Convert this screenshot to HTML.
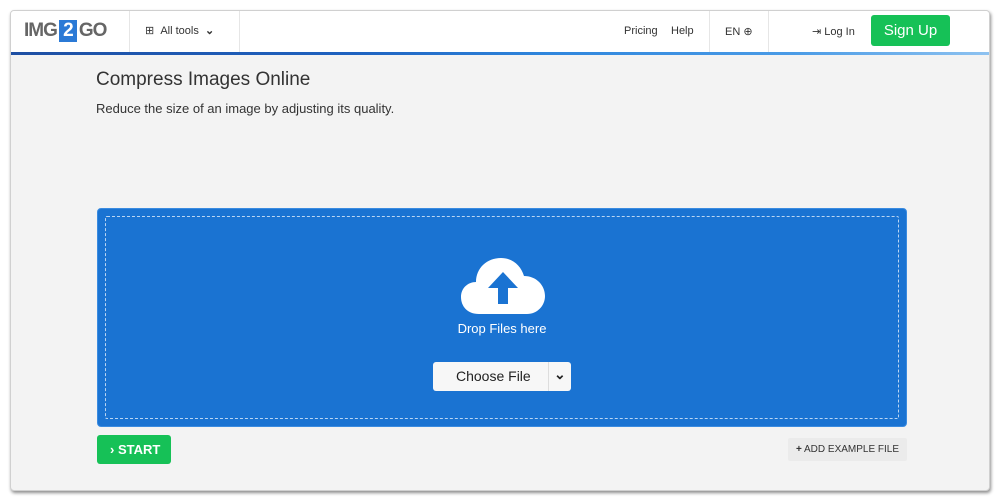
<!DOCTYPE html>
<html><head><meta charset="utf-8"><style>
*{box-sizing:border-box;margin:0;padding:0}
body{width:1000px;height:500px;background:#fff;font-family:"Liberation Sans",sans-serif;position:relative;overflow:hidden}
.win{position:absolute;left:10px;top:10px;width:980px;height:481px;background:#f3f3f3;border:1px solid #d0d0d0;border-radius:4px;box-shadow:1px 2px 3px rgba(0,0,0,.45);overflow:hidden}
.hdr{position:absolute;left:0;top:0;width:100%;height:41px;background:#fff}
.bar{position:absolute;left:0;top:41px;width:100%;height:3px;background:linear-gradient(90deg,#1e4fa3 0%,#1e62c0 35%,#2f86dd 55%,#4a9be6 80%,#8ec2f0 100%)}
.sep{position:absolute;top:0;height:41px;border-left:1px solid #e6e6e6}
.t{position:absolute;font-size:11px;color:#333}
</style></head><body>
<div class="win">
 <div class="hdr">
  <div style="position:absolute;left:13px;top:9px;font-weight:bold;font-size:19px;color:#666;letter-spacing:-1px">IMG<span style="display:inline-block;background:#2b7ad6;color:#fff;width:18px;text-align:center;margin:0 2px">2</span>GO</div>
  <div class="sep" style="left:118px"></div>
  <div class="t" style="left:134px;top:13px">⊞ &nbsp;All tools &nbsp;<b>⌄</b></div>
  <div class="sep" style="left:228px"></div>
  <div class="t" style="left:613px;top:14px">Pricing</div>
  <div class="t" style="left:660px;top:14px">Help</div>
  <div class="sep" style="left:698px"></div>
  <div class="t" style="left:714px;top:14px">EN ⊕</div>
  <div class="sep" style="left:757px"></div>
  <div class="t" style="left:801px;top:14px">⇥ Log In</div>
  <div style="position:absolute;left:860px;top:4px;width:79px;height:31px;background:#16c157;border-radius:3px;color:#fff;font-size:15px;text-align:center;line-height:31px">Sign Up</div>
 </div>
 <div class="bar"></div>
 <div style="position:absolute;left:85px;top:58px;font-size:19px;color:#333">Compress Images Online</div>
 <div style="position:absolute;left:85px;top:90px;font-size:13px;color:#333">Reduce the size of an image by adjusting its quality.</div>
 <div style="position:absolute;left:86px;top:197px;width:810px;height:219px;background:#1a73d2;border-radius:4px;border:1px solid #3a8be0">
  <div style="position:absolute;left:7px;top:7px;right:7px;bottom:7px;border:1px dashed rgba(255,255,255,.7);border-radius:2px"></div>
  <svg style="position:absolute;left:363px;top:47px" width="84" height="60" viewBox="0 0 84 60">
   <path d="M18 58 C6 58 0 50 0 41 C0 32 7 26 15 26 C15 12 26 2 40 2 C52 2 60 10 63 20 C75 20 84 29 84 40 C84 50 76 58 66 58 Z" fill="#fff"/>
   <path d="M42 16 L57 32 L47 32 L47 48 L37 48 L37 32 L27 32 Z" fill="#1a73d2"/>
  </svg>
  <div style="position:absolute;left:0;width:100%;top:112px;text-align:center;color:#fff;font-size:13px">Drop Files here</div>
  <div style="position:absolute;left:335px;top:153px;width:138px;height:29px;background:#f7f7f7;border-radius:3px;font-size:14px;color:#222">
   <span style="position:absolute;left:23px;top:6px">Choose File</span>
   <span style="position:absolute;left:115px;top:0;height:29px;border-left:1px solid #ddd"></span>
   <span style="position:absolute;left:121px;top:4px;font-weight:bold">⌄</span>
  </div>
 </div>
 <div style="position:absolute;left:86px;top:424px;width:74px;height:29px;background:#16c157;border-radius:3px;color:#fff;font-size:13px;font-weight:bold;line-height:29px;padding-left:13px">› START</div>
 <div style="position:absolute;left:777px;top:427px;width:119px;height:23px;background:#ebebeb;border-radius:2px;color:#333;font-size:10px;line-height:23px;text-align:center"><b>+</b> ADD EXAMPLE FILE</div>
</div>
</body></html>
